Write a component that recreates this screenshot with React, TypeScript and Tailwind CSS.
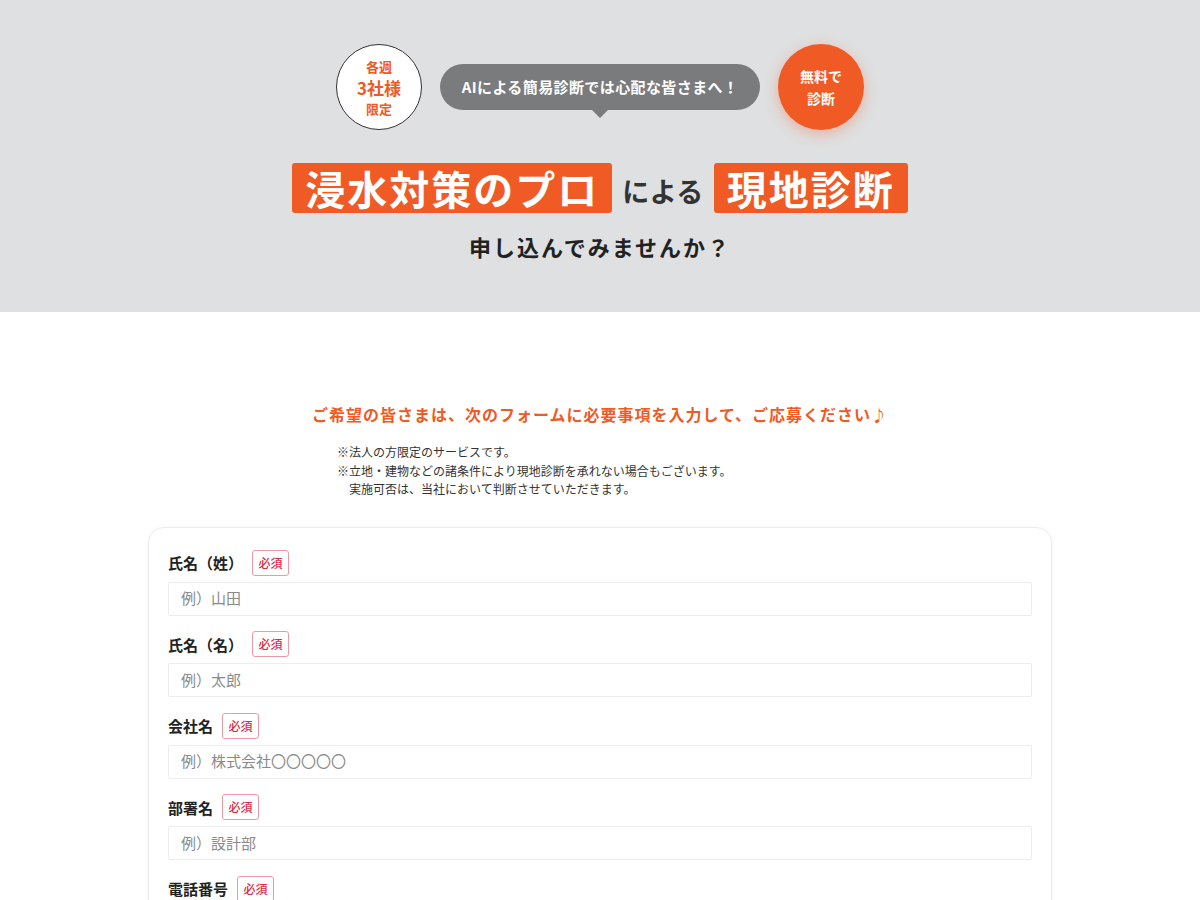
import React from "react";

const font = { fontFamily: '"Noto Sans CJK JP", "Noto Sans", sans-serif' };

type Field = { label: string; placeholder: string };

const fields: Field[] = [
  { label: "氏名（姓）", placeholder: "例）山田" },
  { label: "氏名（名）", placeholder: "例）太郎" },
  { label: "会社名", placeholder: "例）株式会社〇〇〇〇〇" },
  { label: "部署名", placeholder: "例）設計部" },
  { label: "電話番号", placeholder: "例）03-1234-5678" },
  { label: "メールアドレス", placeholder: "例）example@example.com" },
];

function FormRow({ label, placeholder }: Field) {
  return (
    <div className="flex flex-col">
      <div className="flex items-center gap-[9px] h-[26px]">
        <span className="text-[15px] font-bold text-[#222] leading-none">{label}</span>
        <span className="flex items-center justify-center w-[37px] h-[26px] border border-[#eb9aa4] rounded-[3px] text-[12px] font-medium text-[#d92b45] bg-white leading-none">
          必須
        </span>
      </div>
      <div className="mt-[6px] h-[34px] flex items-center border border-[#ededed] rounded-[2px] bg-white px-[12px]">
        <span className="text-[15px] text-[#8a8a8a]">{placeholder}</span>
      </div>
    </div>
  );
}

export default function App() {
  return (
    <div className="w-full bg-white" style={font}>
      {/* hero */}
      <section className="h-[312px] bg-[#dfe0e1] flex flex-col items-center pt-[44px]">
        <div className="flex items-center gap-[18px]">
          <div className="w-[86px] h-[86px] rounded-full bg-white border-[1.5px] border-[#333] flex flex-col items-center justify-center text-[#ee5a24] font-bold leading-none">
            <span className="text-[13px]">各週</span>
            <span className="text-[17px] mt-[6px]">3社様</span>
            <span className="text-[13px] mt-[6px]">限定</span>
          </div>
          <div className="relative w-[320px] h-[46px] rounded-full bg-[#7a7b7d] flex items-center justify-center">
            <span className="text-white text-[15px] font-bold tracking-[0.4px]">AIによる簡易診断では心配な皆さまへ！</span>
            <span className="absolute left-1/2 -translate-x-1/2 top-full w-0 h-0 border-l-[8px] border-r-[8px] border-t-[8px] border-l-transparent border-r-transparent border-t-[#7a7b7d]" />
          </div>
          <div className="w-[86px] h-[86px] rounded-full bg-[#f05a24] shadow-[0_4px_14px_rgba(240,90,36,0.35)] flex flex-col items-center justify-center text-white text-[14px] font-bold leading-[22px]">
            <span>無料で</span>
            <span>診断</span>
          </div>
        </div>

        <div className="mt-[33px] flex items-center gap-[10px]">
          <span className="h-[50px] px-[13px] bg-[#f05a24] rounded-[3px] flex items-center text-white text-[40px] font-bold tracking-[2px] leading-none">
            浸水対策のプロ
          </span>
          <span className="text-[27px] font-bold text-[#333] leading-none pt-[4px] tracking-[0.5px]">による</span>
          <span className="h-[50px] px-[13px] bg-[#f05a24] rounded-[3px] flex items-center text-white text-[40px] font-bold tracking-[2px] leading-none">
            現地診断
          </span>
        </div>

        <p className="mt-[17px] text-[22px] font-bold text-[#222] tracking-[2px]">申し込んでみませんか？</p>
      </section>

      {/* application form */}
      <section className="pt-[90px] flex flex-col items-center pb-[60px]">
        <h2 className="text-[16px] font-bold text-[#f05a24] tracking-[1px] leading-[24px]">
          ご希望の皆さまは、次のフォームに必要事項を入力して、ご応募ください♪
        </h2>
        <div className="mt-[17px] w-[526px] text-[12px] text-[#333] leading-[18.5px]">
          <p>※法人の方限定のサービスです。</p>
          <p>※立地・建物などの諸条件により現地診断を承れない場合もございます。</p>
          <p className="pl-[12px]">実施可否は、当社において判断させていただきます。</p>
        </div>

        <div className="mt-[28px] w-[904px] rounded-[16px] border border-[#ececec] bg-white shadow-[0_1px_6px_rgba(0,0,0,0.04)] px-[19px] pt-[22px] pb-[30px] flex flex-col gap-[15.5px]">
          {fields.map((f) => (
            <FormRow key={f.label} {...f} />
          ))}
        </div>
      </section>
    </div>
  );
}
